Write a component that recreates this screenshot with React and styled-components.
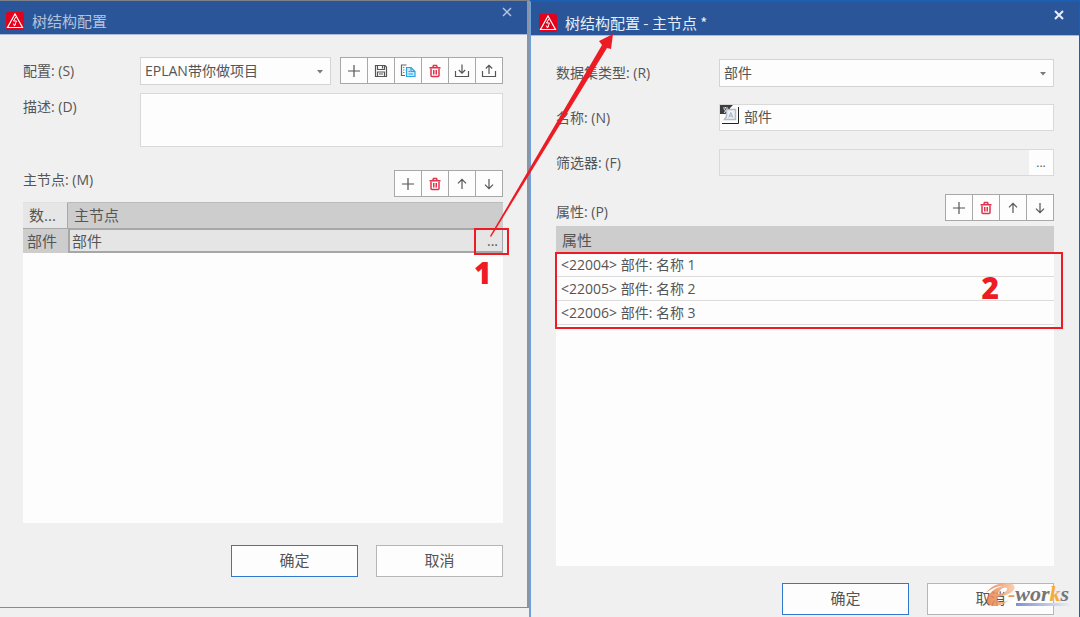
import React from 'react'
import styled, { createGlobalStyle } from 'styled-components'

const GlobalStyle = createGlobalStyle`
    * {
        box-sizing: border-box;
    }
    body {
        margin: 0;
        background-color: #f0f0f0;
        color: #555;
        font-family: 'Open Sans', 'Noto Sans CJK SC', sans-serif;
        font-size: 14px;
    }
    button, input, select, textarea {
        margin: 0;
        color: inherit;
        font-family: inherit;
        border-radius: 0;
        &:focus {
            outline: none;
        }
    }
`
const Desktop = styled.div`
    position: relative;
    display: grid;
    grid-template-columns: 529fr 551fr;
    min-height: 100vh;
    overflow: hidden;
`
const Dialog = styled.section`
    display: flex;
    flex-direction: column;
    min-width: 0;
    background-color: #f0f0f0;
    ${({ $active }) => $active ? `
        border-top: 2px solid #1a5fb4;
        border-right: 1px solid #1a5fb4;
        border-left: 2px solid #6c9fdd;
    ` : `
        margin-bottom: 9px;
        border-top: 1px solid #7c8088;
        border-right: 2px solid #8c949f;
        border-bottom: 1px solid #8a8a8a;
    `}
`
const TitleBar = styled.header`
    display: flex;
    align-items: center;
    gap: 8px;
    height: 34px;
    padding: ${({ $active }) => $active ? '8px 15px 0 8px' : '6px 15px 0 6px'};
    background-color: #2a5699;
    border-bottom: 1px solid #a9bbd8;
    color: ${({ $active }) => $active ? '#e8eef7' : '#b4c3dc'};
    h1 {
        flex: 1;
        margin: 0;
        font-family: 'Noto Sans CJK SC', sans-serif;
        font-size: 15px;
        font-weight: normal;
        line-height: 20px;
    }
`
const CloseBtn = styled.button`
    display: flex;
    align-self: flex-start;
    padding: 0;
    border: 0;
    background: none;
    cursor: pointer;
`
const Body = styled.form`
    flex: 1;
    display: flex;
    flex-direction: column;
    padding: ${({ $active }) => $active ? '23px 25px 2px' : '22px 24px 30px 23px'};
`
const FormRow = styled.div`
    display: grid;
    grid-template-columns: ${({ $labelWidth }) => $labelWidth}px 1fr;
    margin-bottom: ${({ $gap }) => $gap}px;
    label {
        line-height: 28px;
    }
`
const ConfigRow = styled.div`
    display: flex;
    gap: 9px;
`
const SelectBox = styled.div`
    position: relative;
    flex: 1;
    height: 28px;
    select {
        width: 100%;
        height: 100%;
        padding: 0 4px 1px;
        appearance: none;
        background-color: #fdfdfd;
        border: 1px solid #d4d4d4;
        font-size: 14px;
    }
    svg {
        position: absolute;
        top: 12px;
        right: 8px;
        pointer-events: none;
    }
`
const TextArea = styled.textarea`
    display: block;
    width: 100%;
    height: 54px;
    resize: none;
    background-color: #fdfdfd;
    border: 1px solid #d9d9d9;
`
const Field = styled.div`
    display: flex;
    align-items: stretch;
    height: 27px;
    background-color: ${({ $disabled }) => $disabled ? '#f0f0f0' : '#fdfdfd'};
    border: 1px solid #d9d9d9;
    input {
        flex: 1;
        min-width: 0;
        padding: 0 4px 4px;
        border: 0;
        background: none;
        font-size: 14px;
    }
    button {
        width: 24px;
        padding: 0;
        border: 0;
        background-color: #fdfdfd;
        font-size: 12px;
    }
`
const ListHead = styled.div`
    display: flex;
    justify-content: space-between;
    margin-bottom: 5px;
    span {
        padding-top: ${({ $labelTop }) => $labelTop}px;
        line-height: 18px;
    }
`
const Toolbar = styled.div`
    display: flex;
    padding-left: 1px;
`
const ToolBtn = styled.button`
    display: flex;
    align-items: center;
    justify-content: center;
    width: 28px;
    height: 27px;
    margin-left: -1px !important;
    padding: 0 1px 0 0;
    background-color: #fdfdfd;
    border: 1px solid #a8a8a8;
    color: ${({ $danger }) => $danger ? '#e0334c' : '#555'};
    cursor: pointer;
`
const ListBox = styled.div`
    flex: 1;
    background-color: #fdfdfd;
`
const Table = styled.table`
    width: 100%;
    table-layout: fixed;
    border-collapse: separate;
    border-spacing: 0;
    font-size: 15px;
    text-align: left;
    th {
        height: 27px;
        padding: 0 6px;
        background-color: #cdcdcd;
        font-weight: normal;
        line-height: 20px;
    }
    td {
        height: 24px;
        padding: 0 5px;
        line-height: 20px;
    }
`
const NodeTable = styled(Table)`
    th {
        padding-bottom: 2px;
        border-top: 1px solid #bbb;
        border-bottom: 1px solid #a8a8a8;
    }
    th:first-child {
        width: 45px;
        background-color: #e6e6e6;
        border-top-color: #e0e0e0;
        border-right: 1px solid #a8a8a8;
    }
    td {
        padding: 0 4px;
        background-color: #cdcdcd;
    }
    td:last-child {
        padding: 0 0 0 2px;
        background-color: #e5e5e5;
        border: 2px solid #a6a6a6;
        border-top-width: 1px;
        border-right-width: 1px;
    }
`
const NodeValue = styled.div`
    position: relative;
    display: flex;
    justify-content: space-between;
    button {
        width: 25px;
        padding: 0 0 0 6px;
        border: 0;
        background: none;
        font-size: 14px;
        line-height: 20px;
    }
`
const PropertyTable = styled(Table)`
    td {
        border-bottom: 1px solid #dcdcdc;
        font-size: 14px;
    }
`
const PropertyRows = styled.div`
    position: relative;
`
const Footer = styled.footer`
    display: flex;
    justify-content: flex-end;
    gap: 18px;
    margin-top: ${({ $gap }) => $gap}px;
`
const DialogBtn = styled.button`
    width: 127px;
    height: 32px;
    padding: 0 0 3px;
    background-color: #fdfdfd;
    border: 1px solid ${({ $primary }) => $primary ? '#3079cf' : '#b6b6b6'};
    font-size: 15px;
    cursor: pointer;
`
const Mark = styled.div`
    position: absolute;
    border: 2px solid #ed1c24;
    pointer-events: none;
    span {
        position: absolute;
        color: #ed1c24;
        font-size: 30px;
        font-weight: 800;
        line-height: 32px;
    }
`
const NodeMark = styled(Mark)`
    top: -3px;
    right: -7px;
    width: 35px;
    height: 27px;
    span {
        top: 27px;
        left: -2px;
    }
`
const PropertyMark = styled(Mark)`
    top: 26px;
    right: -9px;
    bottom: -4px;
    left: -1px;
    span {
        top: 18px;
        right: 62px;
    }
`
const ArrowLayer = styled.svg`
    position: absolute;
    top: 0;
    left: 0;
    pointer-events: none;
`
const Watermark = styled.svg`
    position: absolute;
    right: 8px;
    bottom: 6px;
    pointer-events: none;
`

const Icon = ({ size = 16, children }) => (
    <svg
        width={size} height={size} viewBox="0 0 16 16"
        fill="none" stroke="currentColor" strokeWidth="1.2" aria-hidden="true"
    >
        {children}
    </svg>
)

const PlusIcon = () => <Icon><path d="M8 2v12M2 8h12" /></Icon>

const SaveIcon = () => (
    <Icon>
        <path d="M2.500 2.500h9.500l1.500 1.500v9.500h-11z" />
        <path d="M4.500 2.500v4h7v-4M9.500 3v2.500M4.500 13.500v-4.500h7v4.500M6 11h4" />
    </Icon>
)

const CopyIcon = () => (
    <Icon>
        <path d="M6.500 2h-5v10.500h3.500" stroke="#666" />
        <path d="M3 4.500h1.500M3 7h1.500M3 9.500h1.500" stroke="#888" />
        <path d="M6.500 4.500h4.500l4 4v5h-8.500z" fill="#c9e9fb" stroke="#2aa3e0" />
        <path d="M11 4.500v4h4M8.500 8.500h1.500M8.500 11h4.500" stroke="#2aa3e0" />
    </Icon>
)

const TrashIcon = () => (
    <Icon>
        <path d="M2.500 4.800h11M5.800 4.500l.7-2h3l.7 2" strokeWidth="1.500" />
        <path d="M4 5.500v7c0 .8.400 1 1 1h6c.6 0 1-.2 1-1v-7" strokeWidth="1.500" />
        <path d="M6.500 7v4.500M8 7v4.500M9.500 7v4.500" strokeWidth="1" />
    </Icon>
)

const ImportIcon = () => (
    <Icon><path d="M1.500 8v5.500h13v-5.500M8 1.500v8.500M4.800 7l3.200 3.200 3.200-3.200" /></Icon>
)

const ExportIcon = () => (
    <Icon><path d="M1.500 8v5.500h13v-5.500M8 11v-8.500M4.800 5.500l3.200-3.200 3.200 3.200" /></Icon>
)

const UpIcon = () => <Icon><path d="M8 13v-9.500M4 7.300l4-4 4 4" /></Icon>

const DownIcon = () => <Icon><path d="M8 3v9.500M4 8.700l4 4 4-4" /></Icon>

const Caret = () => (
    <svg width="6" height="5" viewBox="0 0 6 5" aria-hidden="true">
        <path d="M0 1h6l-3 3.500z" fill="#7a7a7a" />
    </svg>
)

const Logo = () => (
    <svg width="18" height="18" viewBox="0 0 18 18" aria-hidden="true">
        <rect width="18" height="18" rx="2" fill="#e2001a" />
        <path d="M9 2l7.500 13.500h-15z" fill="none" stroke="#fff" strokeWidth="1.200" />
        <path d="M9.800 5l-2.300 4h3l-2 4.500M7.300 11.500l1 2.300 1.700-1.500" fill="none" stroke="#fff" strokeWidth="1" />
    </svg>
)

const LanguageIcon = () => (
    <svg width="20" height="20" viewBox="0 0 20 20" aria-hidden="true">
        <path d="M0 0h13l-3 3v3l-4 3h-6z" fill="#3c3c3c" />
        <path d="M3 3h5M5.500 2v1M4 4l3 4M7 4l-3 4" stroke="#ddd" fill="none" />
        <path d="M6.500 4.500h9v10h-11l2-3z" fill="#eef0f3" stroke="#b4bcc8" strokeWidth="1.500" />
        <path d="M8.800 12.500l2-5 2 5M9.500 11h2.600" stroke="#9fb0c6" fill="none" />
        <path d="M2 18.500h16.500v-16.500" stroke="#222" fill="none" />
    </svg>
)

const TitleRow = ({ title, active }) => (
    <TitleBar $active={active}>
        <Logo />
        <h1>{title}</h1>
        <CloseBtn type="button" aria-label="关闭">
            <svg width="10" height="10" viewBox="0 0 10 10" aria-hidden="true">
                <path
                    d="M1 1l8 8M9 1l-8 8" fill="none"
                    stroke="currentColor" strokeWidth={active ? 2 : 1.5}
                />
            </svg>
        </CloseBtn>
    </TitleBar>
)

const ListTools = () => (
    <Toolbar>
        <ToolBtn type="button" aria-label="新建"><PlusIcon /></ToolBtn>
        <ToolBtn type="button" aria-label="删除" $danger><TrashIcon /></ToolBtn>
        <ToolBtn type="button" aria-label="上移"><UpIcon /></ToolBtn>
        <ToolBtn type="button" aria-label="下移"><DownIcon /></ToolBtn>
    </Toolbar>
)

const properties = [
    '<22004> 部件: 名称 1',
    '<22005> 部件: 名称 2',
    '<22006> 部件: 名称 3'
];

const TreeDialog = () => (
    <Dialog>
        <TitleRow title="树结构配置" />
        <Body>
            <FormRow $labelWidth={117} $gap={8}>
                <label htmlFor="config">配置: (S)</label>
                <ConfigRow>
                    <SelectBox>
                        <select id="config">
                            <option>EPLAN带你做项目</option>
                        </select>
                        <Caret />
                    </SelectBox>
                    <Toolbar>
                        <ToolBtn type="button" aria-label="新建"><PlusIcon /></ToolBtn>
                        <ToolBtn type="button" aria-label="保存"><SaveIcon /></ToolBtn>
                        <ToolBtn type="button" aria-label="复制"><CopyIcon /></ToolBtn>
                        <ToolBtn type="button" aria-label="删除" $danger><TrashIcon /></ToolBtn>
                        <ToolBtn type="button" aria-label="导入"><ImportIcon /></ToolBtn>
                        <ToolBtn type="button" aria-label="导出"><ExportIcon /></ToolBtn>
                    </Toolbar>
                </ConfigRow>
            </FormRow>
            <FormRow $labelWidth={117} $gap={23}>
                <label htmlFor="description">描述: (D)</label>
                <TextArea id="description" />
            </FormRow>
            <ListHead $labelTop={1}>
                <span id="nodes-label">主节点: (M)</span>
                <ListTools />
            </ListHead>
            <ListBox>
                <NodeTable aria-labelledby="nodes-label">
                    <thead>
                        <tr>
                            <th>数...</th>
                            <th>主节点</th>
                        </tr>
                    </thead>
                    <tbody>
                        <tr>
                            <td>部件</td>
                            <td>
                                <NodeValue>
                                    部件
                                    <button type="button" aria-label="编辑主节点">...</button>
                                    <NodeMark><span>1</span></NodeMark>
                                </NodeValue>
                            </td>
                        </tr>
                    </tbody>
                </NodeTable>
            </ListBox>
            <Footer $gap={22}>
                <DialogBtn type="button" $primary>确定</DialogBtn>
                <DialogBtn type="button">取消</DialogBtn>
            </Footer>
        </Body>
    </Dialog>
)

const NodeDialog = () => (
    <Dialog $active>
        <TitleRow title="树结构配置 - 主节点 *" active />
        <Body $active>
            <FormRow $labelWidth={163} $gap={17}>
                <label htmlFor="record-type">数据集类型: (R)</label>
                <SelectBox>
                    <select id="record-type">
                        <option>部件</option>
                    </select>
                    <Caret />
                </SelectBox>
            </FormRow>
            <FormRow $labelWidth={163} $gap={17}>
                <label htmlFor="name">名称: (N)</label>
                <Field>
                    <LanguageIcon />
                    <input id="name" defaultValue="部件" />
                </Field>
            </FormRow>
            <FormRow $labelWidth={163} $gap={17}>
                <label htmlFor="filter">筛选器: (F)</label>
                <Field $disabled>
                    <input id="filter" readOnly />
                    <button type="button" aria-label="选择筛选器">...</button>
                </Field>
            </FormRow>
            <ListHead $labelTop={9}>
                <span id="properties-label">属性: (P)</span>
                <ListTools />
            </ListHead>
            <ListBox>
                <PropertyRows>
                    <PropertyTable aria-labelledby="properties-label">
                        <thead>
                            <tr><th>属性</th></tr>
                        </thead>
                        <tbody>
                            {properties.map(property => (
                                <tr key={property}><td>{property}</td></tr>
                            ))}
                        </tbody>
                    </PropertyTable>
                    <PropertyMark><span>2</span></PropertyMark>
                </PropertyRows>
            </ListBox>
            <Footer $gap={17}>
                <DialogBtn type="button" $primary>确定</DialogBtn>
                <DialogBtn type="button">取消</DialogBtn>
            </Footer>
        </Body>
    </Dialog>
)

const App = () => (
    <Desktop>
        <GlobalStyle />
        <TreeDialog />
        <NodeDialog />
        <ArrowLayer width="640" height="260" viewBox="0 0 640 260" aria-hidden="true">
            <path d="M490 236L602 45l-3-4 14-7-2 15-4-1L491 237z" fill="#ed1c24" />
        </ArrowLayer>
        <Watermark width="88" height="30" viewBox="0 0 88 30" aria-label="e-works">
            <defs>
                <linearGradient id="swoosh" x1="0" x2="1">
                    <stop offset="0" stopColor="#e8743c" />
                    <stop offset="1" stopColor="#f8c9a4" />
                </linearGradient>
                <linearGradient id="underline" x1="0" x2="1">
                    <stop offset="0" stopColor="#7d93cf" />
                    <stop offset="1" stopColor="#e9edf7" />
                </linearGradient>
            </defs>
            <path
                d="M2 12C8 3 20 0 28 3c6 3 2 11-15 13-1 5 4 7 12 3-6 6-20 9-22 2C2 14 10 7 19 5 12 5 7 8 2 12zM14 13c5 0 10-3 9-6-3-2-8 2-9 6z"
                fill="url(#swoosh)" fillRule="evenodd" opacity="0.850"
            />
            <text
                x="24" y="20" fill="#74767a" fontFamily="Liberation Serif, serif"
                fontSize="22" fontWeight="bold" fontStyle="italic"
            >
                <tspan fill="#f0935c">-</tspan>wor<tspan fill="#f5ab3c">k</tspan>s
            </text>
            <rect x="32" y="22" width="54" height="3" fill="url(#underline)" />
        </Watermark>
    </Desktop>
)

export default App;
